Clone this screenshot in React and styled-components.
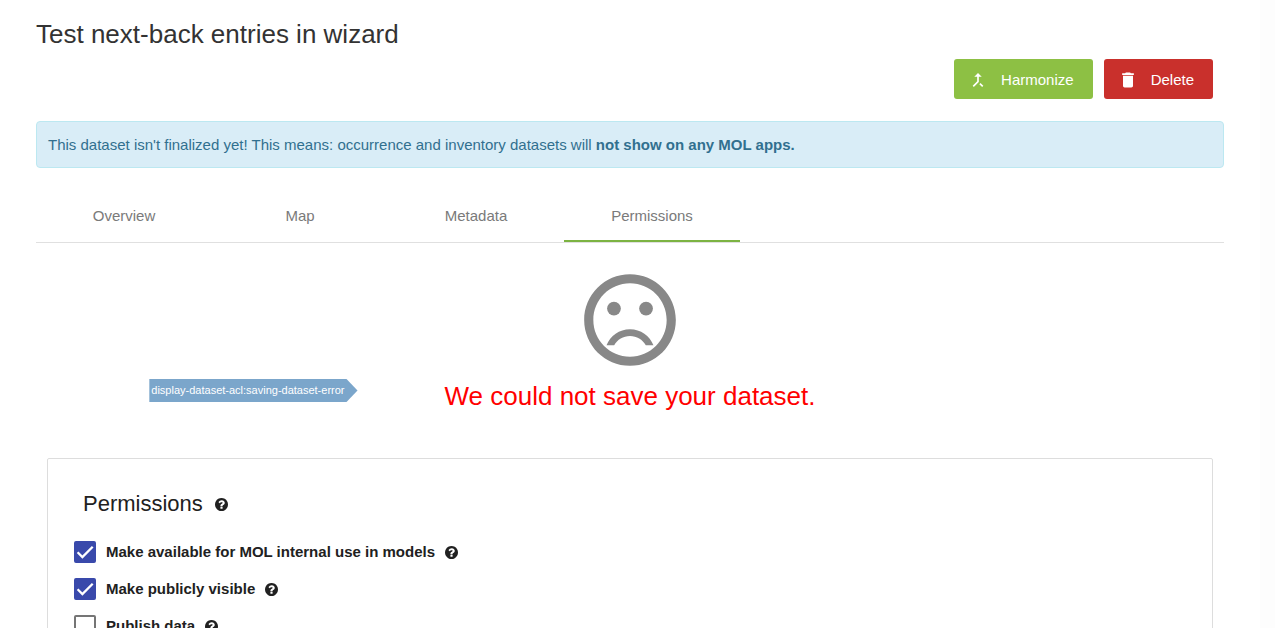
import React, { useState } from "react";
import styled, { createGlobalStyle, css } from "styled-components";

const GlobalStyle = createGlobalStyle`
  *, *::before, *::after { box-sizing: border-box; }
  body {
    margin: 0;
    background: #fff;
    color: #212121;
    font: 15px/20px "Liberation Sans", Arial, Helvetica, sans-serif;
  }
  button, input { font: inherit; }
`;

const Page = styled.div`
  display: flex;
  height: 100vh;
  overflow: hidden;
`;

const Main = styled.main`
  flex: 1;
  min-width: 0;
  padding: 18px 36px 0;
`;

const Gutter = styled.div`
  flex: none;
  width: 15px;
  background: #fdfdfd;
`;

const Title = styled.h1`
  margin: 0;
  font-size: 26px;
  line-height: 32px;
  font-weight: 400;
  color: #333;
`;

const Actions = styled.div`
  display: flex;
  justify-content: flex-end;
  gap: 11px;
  margin: 9px 11px 22px;
`;

const ActionButton = styled.button`
  display: flex;
  align-items: center;
  gap: 13px;
  height: 40px;
  padding: 2px 19px 0 14px;
  border: 0;
  border-radius: 3px;
  color: #fff;
  background: ${(p) => (p.$danger ? "#c9302c" : "#8dc044")};
  cursor: pointer;

  svg {
    width: 20px;
    height: 20px;
    fill: currentColor;
  }
`;

const Alert = styled.div`
  padding: 13px 11px 12px;
  border: 1px solid #bce8f1;
  border-radius: 4px;
  background: #d9edf7;
  color: #31708f;
`;

const Tabs = styled.div`
  display: flex;
  margin-top: 21px;
  border-bottom: 1px solid #e0e0e0;
`;

const Tab = styled.button`
  width: 176px;
  height: 53px;
  padding: 2px 0 0;
  border: 0;
  border-bottom: 2px solid transparent;
  background: none;
  color: #7a7a7a;
  cursor: pointer;
  ${(p) => p.$active && css`border-bottom-color: #7cb342;`}
`;

const ErrorPanel = styled.section`
  display: flex;
  flex-direction: column;
  align-items: center;
  padding: 22px 0 45px;
`;

const SadFace = styled.svg`
  width: 110px;
  height: 110px;
  fill: #888;
`;

const ErrorLine = styled.div`
  display: grid;
  grid-template-columns: 1fr auto 1fr;
  align-items: start;
  width: 100%;
  margin-top: 4px;
`;

const KeyTag = styled.span`
  justify-self: end;
  margin-right: 87px;
  padding: 0 13px 0 2px;
  font-size: 11px;
  line-height: 23px;
  white-space: nowrap;
  color: #fff;
  background: #7ba6cb;
  clip-path: polygon(0 0, calc(100% - 11px) 0, 100% 50%, calc(100% - 11px) 100%, 0 100%);
`;

const ErrorText = styled.p`
  margin: 0;
  font-size: 26px;
  line-height: 34px;
  color: #f00;
`;

const Card = styled.section`
  margin: 0 11px;
  padding: 32px 26px;
  border: 1px solid #ddd;
  border-radius: 2px;
`;

const CardTitle = styled.h2`
  display: flex;
  align-items: baseline;
  gap: 12px;
  margin: 0 0 24px;
  padding-left: 9px;
  font-size: 22px;
  line-height: 26px;
  font-weight: 400;
`;

const HelpSvg = styled.svg`
  flex: none;
  width: 13px;
  height: 13px;
  fill: currentColor;
`;

const Options = styled.div`
  display: grid;
  gap: 15px;
`;

const Option = styled.label`
  display: flex;
  align-items: center;
  gap: 10px;
  font-weight: 700;
`;

const Checkbox = styled.input`
  appearance: none;
  flex: none;
  width: 22px;
  height: 22px;
  margin: 0;
  border: 2px solid #757575;
  border-radius: 2px;

  &:checked {
    border-color: #3949ab;
    background: #3949ab;
  }
`;

const CheckBoxWrap = styled.span`
  display: grid;

  > * { grid-area: 1 / 1; }
`;

const Tick = styled.svg`
  width: 22px;
  height: 22px;
  fill: none;
  stroke: #fff;
  stroke-width: 2.3;
  pointer-events: none;
`;

const tabs = ["Overview", "Map", "Metadata", "Permissions"];

const options = [
  { label: "Make available for MOL internal use in models", checked: true },
  { label: "Make publicly visible", checked: true },
  { label: "Publish data", checked: false },
];

function HelpIcon() {
  return (
    <HelpSvg viewBox="0 128 1536 1536" aria-hidden="true">
      <path d="M896 1376v-192q0-14-9-23t-23-9H672q-14 0-23 9t-9 23v192q0 14 9 23t23 9h192q14 0 23-9t9-23zM1152 704q0-88-55.5-163T958 425t-170-41q-243 0-371 213-15 24 8 42l132 100q7 6 19 6 16 0 25-12 53-68 86-92 34-24 86-24 48 0 85.5 26t37.5 59q0 38-20 61t-68 45q-63 28-115.5 86.5T640 1020v36q0 14 9 23t23 9h192q14 0 23-9t9-23q0-19 21.5-49.5T972 957q32-18 49-28.5t46-35 44.5-48 28-60.5 12.5-81zM1536 896q0 209-103 385.5T1153.5 1561 768 1664t-385.5-103T103 1281.5 0 896t103-385.5T382.5 231 768 128t385.5 103T1433 510.5 1536 896z" />
    </HelpSvg>
  );
}

function PermissionOption({ label, checked }) {
  const [on, setOn] = useState(checked);
  return (
    <Option>
      <CheckBoxWrap>
        <Checkbox type="checkbox" checked={on} onChange={() => setOn(!on)} />
        {on && (
          <Tick viewBox="0 0 22 22" aria-hidden="true">
            <path d="M3.6 11.3 8.4 16.1 18.7 5.8" />
          </Tick>
        )}
      </CheckBoxWrap>
      {label}
      <HelpIcon />
    </Option>
  );
}

export default function App() {
  const [active, setActive] = useState("Permissions");
  return (
    <>
      <GlobalStyle />
      <Page>
        <Main>
          <Title>Test next-back entries in wizard</Title>
          <Actions>
            <ActionButton type="button">
              <svg viewBox="0 0 24 24" aria-hidden="true">
                <path d="M17 20.41 18.41 19 15 15.59 13.59 17 17 20.41zM7.5 8H11v5.59L5.59 19 7 20.41l6-6V8h3.5L12 3.5 7.5 8z" />
              </svg>
              Harmonize
            </ActionButton>
            <ActionButton type="button" $danger>
              <svg viewBox="0 0 24 24" aria-hidden="true">
                <path d="M6 19c0 1.1.9 2 2 2h8c1.1 0 2-.9 2-2V7H6v12zM19 4h-3.5l-1-1h-5l-1 1H5v2h14V4z" />
              </svg>
              Delete
            </ActionButton>
          </Actions>
          <Alert>
            This dataset isn't finalized yet! This means: occurrence and inventory datasets will{" "}
            <strong>not show on any MOL apps.</strong>
          </Alert>
          <Tabs role="tablist">
            {tabs.map((name) => (
              <Tab
                key={name}
                type="button"
                role="tab"
                aria-selected={name === active}
                $active={name === active}
                onClick={() => setActive(name)}
              >
                {name}
              </Tab>
            ))}
          </Tabs>
          <ErrorPanel>
            <SadFace viewBox="0 0 24 24" aria-hidden="true">
              <circle cx="15.5" cy="9.5" r="1.5" />
              <circle cx="8.5" cy="9.5" r="1.5" />
              <path d="M12 14c-2.33 0-4.32 1.45-5.12 3.5h1.67c.69-1.19 1.97-2 3.45-2s2.75.81 3.45 2h1.67c-.8-2.05-2.79-3.5-5.12-3.5z" />
              <path d="M11.99 2C6.47 2 2 6.48 2 12s4.47 10 9.99 10C17.52 22 22 17.52 22 12S17.52 2 11.99 2zM12 20c-4.42 0-8-3.58-8-8s3.58-8 8-8 8 3.58 8 8-3.58 8-8 8z" />
            </SadFace>
            <ErrorLine>
              <KeyTag>display-dataset-acl:saving-dataset-error</KeyTag>
              <ErrorText>We could not save your dataset.</ErrorText>
            </ErrorLine>
          </ErrorPanel>
          <Card>
            <CardTitle>
              Permissions
              <HelpIcon />
            </CardTitle>
            <Options>
              {options.map((option) => (
                <PermissionOption key={option.label} {...option} />
              ))}
            </Options>
          </Card>
        </Main>
        <Gutter />
      </Page>
    </>
  );
}
